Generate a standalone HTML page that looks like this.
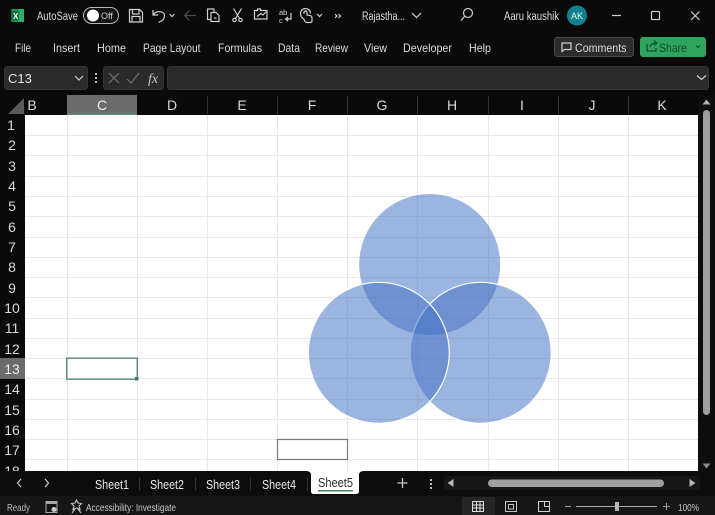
<!DOCTYPE html>
<html><head><meta charset="utf-8"><style>
html,body{margin:0;padding:0;background:#0a0a0a;width:715px;height:515px;overflow:hidden}
svg{display:block;filter:blur(.3px)}
text{font-family:"Liberation Sans",sans-serif;fill:#e4e4e4}
.r{font-size:12px;text-anchor:start;fill:#dcdcdc}
.h{font-size:14px;text-anchor:middle;fill:#d8d8d8}
.t{font-size:13px;fill:#e8e8e8}
.i{fill:none;stroke:#d0d0d0;stroke-width:1.2}
</style></head><body>
<svg width="715" height="515" viewBox="0 0 715 515" xmlns="http://www.w3.org/2000/svg">
<rect width="715" height="515" fill="#0a0a0a"/>

<!-- title bar -->
<rect x="11" y="9" width="13" height="13" rx="1" fill="#1d8a4e"/>
<rect x="18" y="9" width="6" height="13" fill="#2fae6a"/>
<rect x="11" y="11" width="8" height="9" fill="#0f6b3a"/>
<text x="13" y="19" style="font-size:8px;font-weight:bold;fill:#fff">X</text>
<text x="37" y="20" textLength="41" lengthAdjust="spacingAndGlyphs" style="font-size:11.500px;fill:#d8d8d8">AutoSave</text>
<rect x="83.500" y="7.500" width="35" height="16" rx="8" fill="#111" stroke="#b5b5b5"/>
<circle cx="93" cy="15.500" r="6" fill="#fff"/>
<text x="101" y="19" style="font-size:9px;fill:#d8d8d8">Off</text>
<!-- save -->
<path class="i" d="M129.500 9.500h10l3 3v9.500h-13zM132.500 9.500v4.500h6.500v-4.500M132 22v-5.500h8v5.500"/>
<!-- undo -->
<path class="i" stroke-width="1.400" d="M153 10v5h5M153.500 14.500c3-4 11-4 11 1.500 0 3-2.500 5-6 6.500"/>
<path class="i" d="M169.500 14l2.500 2.500 2.500-2.500" stroke-width="1"/>
<!-- redo arrow -->
<path fill="none" stroke="#4d4d4d" stroke-width="1.200" d="M184.500 15.500h11.500M189.500 10.500l-5 5 5 5"/>
<!-- paste -->
<path class="i" d="M211 19.500h-3.500v-10.500h6.500v3M211 12.500h5l3 3v6h-8zM214 18h2.500"/>
<!-- cut -->
<path class="i" d="M233.500 8.500l6 10M241.500 8.500l-6 10"/>
<circle class="i" cx="234.500" cy="20" r="1.700"/><circle class="i" cx="240.500" cy="20" r="1.700"/>
<!-- format -->
<path class="i" d="M254.500 10.500h3v-1.500h3v1.500h6.500v8.500h-12.500zM257 16.500l4-3 2 1.500 3-3"/>
<!-- ab -->
<text x="279" y="15" style="font-size:7.500px;fill:#d0d0d0">ab</text>
<text x="279" y="23" style="font-size:7.500px;fill:#d0d0d0">c</text>
<path class="i" d="M291 13v6h-5M288 17l-2.500 2 2.500 2"/>
<!-- touch -->
<path class="i" d="M304 19c-2-1-3.500-3-3.500-5.500 0-3 2.500-5 5-5s5 2 5 5M304 14v-1.500c0-2 3-2 3 0v2.500l3 .5c2 .5 2 1.500 2 3v2.500c0 1-1 1.500-2 1.500h-3c-1.500 0-2-1-2.500-2l-1-2"/>
<path class="i" d="M317 14l2.500 2.500 2.500-2.500" stroke-width="1"/>
<path class="i" d="M335 14l2 2-2 2M338.500 14l2 2-2 2" stroke-width="1"/>

<text x="362" y="20" textLength="43" lengthAdjust="spacingAndGlyphs" style="font-size:11.500px;fill:#dcdcdc">Rajastha...</text>
<path class="i" d="M412 13l4.500 4.500 4.500-4.500"/>
<circle class="i" cx="468" cy="13" r="4.500"/><path class="i" d="M464.500 16.500l-3.500 4"/>
<text x="504" y="20" textLength="55" lengthAdjust="spacingAndGlyphs" style="font-size:11.500px;fill:#dcdcdc">Aaru kaushik</text>
<circle cx="577" cy="15.500" r="10" fill="#12808f"/>
<text x="577" y="19" text-anchor="middle" style="font-size:9px;fill:#dff">AK</text>
<path class="i" d="M612 15.500h9"/>
<rect class="i" x="651.500" y="11.500" width="8" height="8" rx="1"/>
<path class="i" stroke-width="1.300" d="M691 11.500l8.500 8.500M699.500 11.500l-8.500 8.500"/>

<!-- ribbon tabs -->
<text class="r" x="15" y="52" textLength="16" lengthAdjust="spacingAndGlyphs">File</text>
<text class="r" x="53" y="52" textLength="27" lengthAdjust="spacingAndGlyphs">Insert</text>
<text class="r" x="97" y="52" textLength="29" lengthAdjust="spacingAndGlyphs">Home</text>
<text class="r" x="143" y="52" textLength="57.500" lengthAdjust="spacingAndGlyphs">Page Layout</text>
<text class="r" x="218" y="52" textLength="44" lengthAdjust="spacingAndGlyphs">Formulas</text>
<text class="r" x="278" y="52" textLength="22" lengthAdjust="spacingAndGlyphs">Data</text>
<text class="r" x="315" y="52" textLength="33" lengthAdjust="spacingAndGlyphs">Review</text>
<text class="r" x="364" y="52" textLength="23" lengthAdjust="spacingAndGlyphs">View</text>
<text class="r" x="403" y="52" textLength="49" lengthAdjust="spacingAndGlyphs">Developer</text>
<text class="r" x="469" y="52" textLength="22" lengthAdjust="spacingAndGlyphs">Help</text>
<rect x="554.500" y="37.500" width="79" height="19" rx="3" fill="#2c2c2c" stroke="#4a4a4a"/>
<path class="i" d="M562 43h9v6.500h-6.500l-2.500 2z"/>
<text x="575" y="52" textLength="51.500" lengthAdjust="spacingAndGlyphs" style="font-size:12px;fill:#dcdcdc">Comments</text>
<rect x="640" y="37" width="66" height="20" rx="3" fill="#2ea45f"/>
<path fill="none" stroke="#174f2e" stroke-width="1.200" d="M647 44v7h9v-3M650 47c1-3 3-4 6-4M654 40.500l3 2.500-3 2.500"/>
<text x="659" y="52" textLength="28" lengthAdjust="spacingAndGlyphs" style="font-size:12px;fill:#14482a">Share</text>
<path fill="none" stroke="#174f2e" d="M696 45.500l2 2 2-2"/>

<!-- formula bar -->
<rect x="4.500" y="66.500" width="83" height="23" rx="3" fill="#2b2b2b" stroke="#353535"/>
<text x="8" y="83" style="font-size:13px;fill:#e4e4e4">C13</text>
<path class="i" d="M75 76l4 4 4-4"/>
<rect x="95" y="73" width="2" height="2" fill="#bbb"/><rect x="95" y="77" width="2" height="2" fill="#bbb"/><rect x="95" y="81" width="2" height="2" fill="#bbb"/>
<rect x="103.500" y="66.500" width="60" height="23" rx="3" fill="#2b2b2b" stroke="#353535"/>
<path fill="none" stroke="#6e6e6e" stroke-width="1.200" d="M109 73l10 10M119 73l-10 10M127 79l4 4 8-10"/>
<text x="148" y="83" style="font-family:'Liberation Serif',serif;font-size:14px;font-style:italic;fill:#c8c8c8">fx</text>
<rect x="167.500" y="66.500" width="541" height="23" rx="3" fill="#2b2b2b" stroke="#353535"/>
<path class="i" d="M697 75.500l4.500 4 4.500-4"/>

<!-- col headers -->
<rect x="0" y="95" width="699" height="20" fill="#0a0a0a"/>
<path d="M8 114L24 98V114Z" fill="#5a5a5a"/>
<rect x="67" y="95" width="70" height="19" fill="#6b6b6b"/>
<rect x="67" y="113.500" width="70" height="1.500" fill="#5f8a75"/>
<g stroke="#333" stroke-width="1">
<path d="M207.500 96v18M277.500 96v18M347.500 96v18M417.500 96v18M488.500 96v18M558.500 96v18M628.500 96v18M698.500 96v18"/>
</g>
<text class="h" x="32" y="110">B</text><text class="h" x="102" y="110" style="fill:#eee">C</text><text class="h" x="172" y="110">D</text><text class="h" x="242" y="110">E</text><text class="h" x="312" y="110">F</text><text class="h" x="382" y="110">G</text><text class="h" x="452" y="110">H</text><text class="h" x="522" y="110">I</text><text class="h" x="592" y="110">J</text><text class="h" x="662" y="110">K</text>

<!-- sheet -->
<rect x="25" y="115" width="673" height="356" fill="#fff"/>
<g stroke="#e8e8e8" stroke-width="1">
<path d="M67.500 115v356M137.500 115v356M207.500 115v356M277.500 115v356M347.500 115v356M417.500 115v356M488.500 115v356M558.500 115v356M628.500 115v356"/>
<path d="M25 135.500h673M25 155.500h673M25 176.500h673M25 196.500h673M25 216.500h673M25 237.500h673M25 257.500h673M25 277.500h673M25 297.500h673M25 318.500h673M25 338.500h673M25 358.500h673M25 378.500h673M25 399.500h673M25 419.500h673M25 439.500h673M25 459.500h673"/>
</g>

<!-- row headers -->
<rect x="0" y="358" width="25" height="21" fill="#6b6b6b"/>
<g>
<text class="h" x="11" y="130">1</text><text class="h" x="12" y="150">2</text><text class="h" x="12" y="171">3</text><text class="h" x="12" y="191">4</text><text class="h" x="12" y="211">5</text><text class="h" x="12" y="232">6</text><text class="h" x="12" y="252">7</text><text class="h" x="12" y="272">8</text><text class="h" x="12" y="293">9</text><text class="h" x="12" y="313">10</text><text class="h" x="12" y="333">11</text><text class="h" x="12" y="354">12</text><text class="h" x="12" y="374" style="fill:#f2f2f2">13</text><text class="h" x="12" y="394">14</text><text class="h" x="12" y="415">15</text><text class="h" x="12" y="435">16</text><text class="h" x="12" y="455">17</text><text class="h" x="12" y="476">18</text>
</g>

<!-- selected cell -->
<rect x="66.700" y="358.200" width="70.600" height="21" fill="none" stroke="#5c8a73" stroke-width="1.400"/>
<rect x="135" y="377" width="3.500" height="3.500" fill="#3f7a5c"/>

<!-- outlined shape -->
<rect x="277.500" y="439.500" width="70" height="20" fill="#fff" stroke="#787878" stroke-width="1.200"/>

<!-- venn -->
<circle cx="429.700" cy="264.500" r="70.500" fill="#4472c4" fill-opacity=".53"/>
<circle cx="480.700" cy="352.800" r="70.500" fill="#4472c4" fill-opacity=".53" stroke="#fff" stroke-width="1.200"/>
<circle cx="378.800" cy="352.800" r="70.500" fill="#4472c4" fill-opacity=".53" stroke="#fff" stroke-width="1.200"/>

<!-- v scrollbar -->
<rect x="698" y="95" width="17" height="376" fill="#0e0e0e"/>
<path d="M706.500 99.500l4 5h-8z" fill="#b0b0b0"/>
<rect x="703" y="110" width="7" height="305" rx="3.500" fill="#9e9e9e"/>
<path d="M706.500 468.500l4-5h-8z" fill="#8a8a8a"/>

<!-- sheet tabs bar -->
<rect x="0" y="471" width="715" height="25" fill="#0d0d0d"/>
<path class="i" d="M21 479l-3.500 4 3.500 4" stroke="#888"/>
<path class="i" d="M45 479l3.500 4-3.500 4" stroke="#888"/>
<text class="t" x="95" y="489" textLength="34" lengthAdjust="spacingAndGlyphs">Sheet1</text>
<rect x="139" y="477" width="1" height="14" fill="#333"/>
<text class="t" x="150" y="489" textLength="34" lengthAdjust="spacingAndGlyphs">Sheet2</text>
<rect x="195" y="477" width="1" height="14" fill="#333"/>
<text class="t" x="206" y="489" textLength="34" lengthAdjust="spacingAndGlyphs">Sheet3</text>
<rect x="250" y="477" width="1" height="14" fill="#333"/>
<text class="t" x="262" y="489" textLength="34" lengthAdjust="spacingAndGlyphs">Sheet4</text>
<rect x="307" y="477" width="1" height="14" fill="#333"/>
<path d="M306 471h58q-5 0-5 4v16q0 3-3 3h-42q-3 0-3-3v-16q0-4-5-4z" fill="#fff"/>
<text class="t" x="318" y="487" textLength="35" lengthAdjust="spacingAndGlyphs" style="fill:#2a2a2a">Sheet5</text>
<rect x="318" y="490" width="35" height="1.500" fill="#3f8a60"/>
<path d="M402.500 478v10M397.500 483h10" stroke="#c8c8c8" stroke-width="1.300" fill="none"/>
<rect x="430" y="479" width="2" height="2" fill="#bbb"/><rect x="430" y="483" width="2" height="2" fill="#bbb"/><rect x="430" y="487" width="2" height="2" fill="#bbb"/>
<rect x="444" y="476" width="256" height="14" rx="3" fill="#161616"/>
<path d="M447.500 483l6-4v8z" fill="#b5b5b5"/>
<rect x="488" y="479.500" width="176" height="7.500" rx="3.700" fill="#a0a0a0"/>
<path d="M695.500 483l-6-4v8z" fill="#b5b5b5"/>

<!-- status bar -->
<rect x="0" y="496" width="715" height="19" fill="#161616"/>
<text x="7" y="511" textLength="23" lengthAdjust="spacingAndGlyphs" style="font-size:10.500px;fill:#bdbdbd">Ready</text>
<path fill="none" stroke="#a8a8a8" d="M46 501.500h11v11h-11z"/><rect x="46" y="501" width="11" height="3" fill="#a8a8a8"/><circle cx="54" cy="509.500" r="2.500" fill="#ccc"/>
<path fill="none" stroke="#c4c4c4" stroke-width="1.100" d="M76.500 500l1.500 3 3.500.5-2.500 2.500 1 3.500-3.500-1.500-3.500 1.500 1-3.500-2.500-2.500 3.500-.5zM72 513l3-4M81 513l-3-4"/>
<text x="86" y="511" textLength="90" lengthAdjust="spacingAndGlyphs" style="font-size:10.500px;fill:#c8c8c8">Accessibility: Investigate</text>
<rect x="462" y="497" width="33" height="18" fill="#262626"/>
<path fill="none" stroke="#dcdcdc" d="M472.500 501.500h11v10h-11zM476.500 501.500v10M480 501.500v10M472.500 505h11M472.500 508h11"/>
<path fill="none" stroke="#c4c4c4" d="M505.500 501.500h11v10h-11zM508.500 504.500h5v4.500h-5z"/>
<path fill="none" stroke="#d0d0d0" d="M538.500 501.500h11v10h-11zM544.500 501.500v5h5"/>
<path d="M565 506.500h6M663 506.500h7M666.500 503v7" stroke="#999" fill="none"/>
<rect x="576" y="506" width="81" height="1" fill="#a8a8a8"/>
<rect x="615" y="502" width="4" height="9" fill="#b8b8b8"/>
<text x="678" y="511" textLength="21" lengthAdjust="spacingAndGlyphs" style="font-size:10.500px;fill:#c8c8c8">100%</text>
</svg>
</body></html>
